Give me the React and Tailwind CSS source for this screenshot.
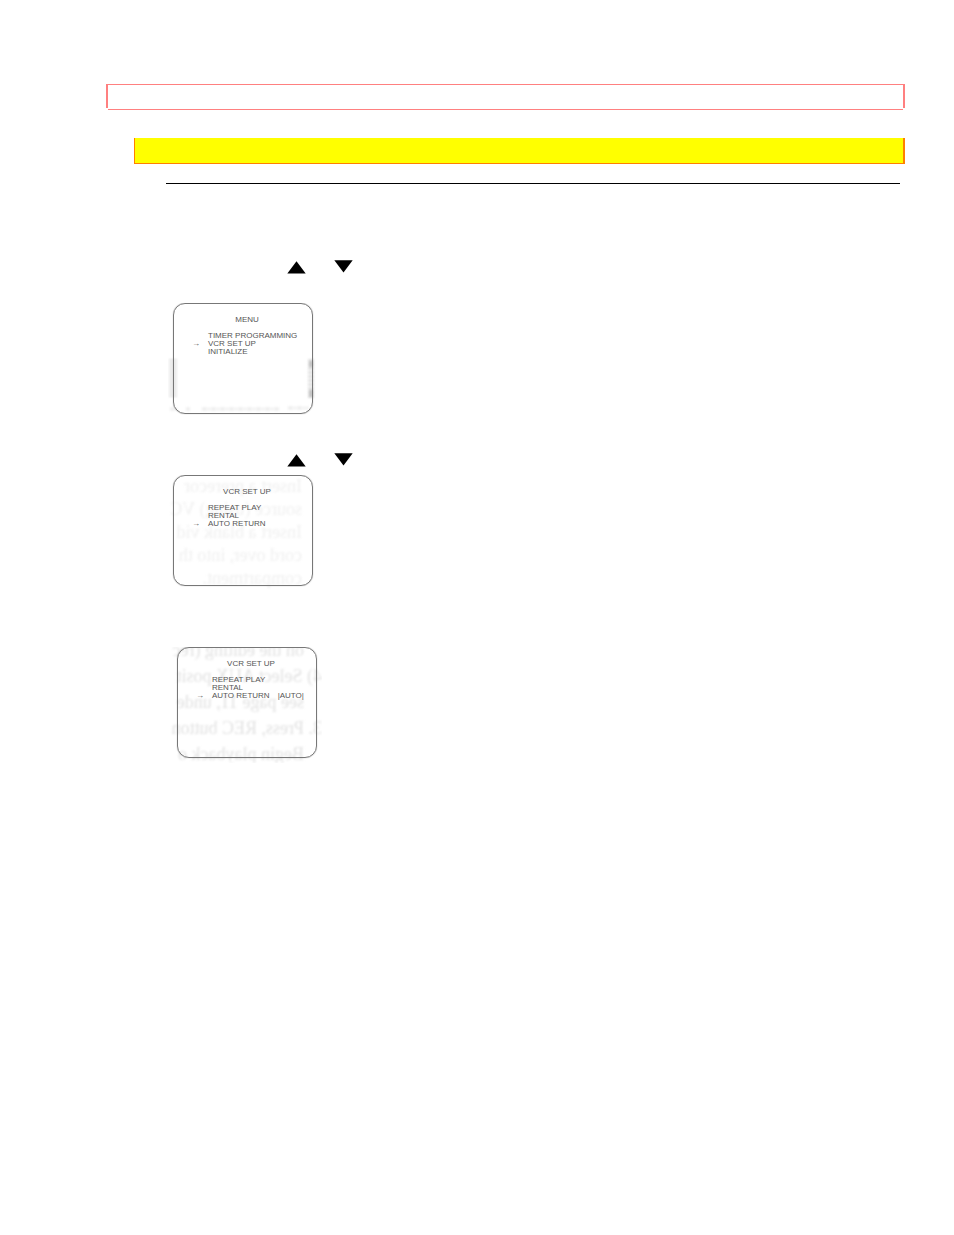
import React from 'react';
import clsx from 'clsx';

const setupItems = ['REPEAT PLAY', 'RENTAL', 'AUTO RETURN'];

const ArrowKeys = () => (
  <div className="ml-[181px] flex h-4 items-start gap-7">
    <svg className="mt-0.5 h-[13px] w-[19px]" viewBox="0 0 19 13" role="img" aria-label="Up">
      <path d="M9.5 0.3 L18.7 12.6 H0.3 Z" fill="#000" />
    </svg>
    <svg className="mt-px h-[13px] w-[19px]" viewBox="0 0 19 13" role="img" aria-label="Down">
      <path d="M0.3 0.3 H18.7 L9.5 12.6 Z" fill="#000" />
    </svg>
  </div>
);

// Faint print showing through from the back of the sheet, so it reads mirrored
const ShowThrough = ({ lines, className }) => (
  <div
    aria-hidden="true"
    className={clsx(
      'absolute inset-0 -scale-x-100 overflow-hidden whitespace-pre font-["Liberation_Serif",serif] text-[18px] blur-[1px]',
      className
    )}
  >
    {lines.map((line) => (
      <div key={line}>{line}</div>
    ))}
  </div>
);

const Smudges = () => (
  <svg aria-hidden="true" className="absolute inset-0 h-full w-full blur-[1px]" viewBox="0 0 154 116">
    <path d="M5 56 V95" stroke="#e2e2e2" strokeWidth="8" strokeDasharray="2 1" />
    <path d="M143 56 V95" stroke="#e2e2e2" strokeWidth="6" strokeDasharray="3 1" />
    <path d="M143 58 V64 M143 87 V94" stroke="#c4c4c4" strokeWidth="4" />
    <path d="M2 106 H9 M18 106 H22 M34 106 H112 M120 105 H140" stroke="#ececec" strokeWidth="3" strokeDasharray="5 1 2 1" />
  </svg>
);

const TvScreen = ({ title, items, active, value, className, children }) => (
  <div className="relative h-[116px] w-[154px] overflow-hidden">
    {children}
    <div
      className={clsx(
        'relative h-[111px] w-[140px] rounded-xl border border-[#777] pt-3 font-["Liberation_Sans",sans-serif] text-[8px] leading-2 text-[#555] shadow-[0_0_1px_#999]',
        className
      )}
    >
      <h2 className="pl-2 text-center">{title}</h2>
      <ul className="mt-2">
        {items.map((item) => (
          <li key={item} className="flex">
            <span className="w-[34px] pl-[18px]">{item === active ? '→' : ''}</span>
            <span>{item}</span>
            {item === active && value && <span className="ml-2">{value}</span>}
          </li>
        ))}
      </ul>
    </div>
  </div>
);

const App = () => {
  return (
    <main className="min-h-screen bg-white pt-21 pr-[49px] pb-10 pl-[106px]">
      {/* Title bars */}
      <header>
        <div className="h-6 border-x-2 border-t border-[#ff8080]" />
        <div className="mx-0.5 mt-px h-px bg-[#ff8080]" />
        <div className="mt-7 ml-7 h-[26px] border-r-2 border-b border-l border-[#ff8000] bg-[#ffff00]" />
        <hr className="mt-[19px] mr-[5px] ml-15 border-t border-black" />
      </header>

      {/* Setup steps */}
      <section className="mt-[75px] ml-[62px]">
        <div className="-ml-[62px]">
          <ArrowKeys />
        </div>
        <div className="mt-7">
          <TvScreen
            title="MENU"
            items={['TIMER PROGRAMMING', 'VCR SET UP', 'INITIALIZE']}
            active="VCR SET UP"
            className="ml-[5px]"
          >
            <Smudges />
          </TvScreen>
        </div>

        <div className="mt-[33px] -ml-[62px]">
          <ArrowKeys />
        </div>
        <div className="mt-[7px]">
          <TvScreen title="VCR SET UP" items={setupItems} active="AUTO RETURN" className="ml-[5px]">
            <ShowThrough
              className="pl-5 leading-[23px] text-[#f0f0f0]"
              lines={['Insert a prerecor', 'source (using) VC', 'Insert a blank vid', 'cord over, into th', 'compartment.']}
            />
          </TvScreen>
        </div>

        <div className="mt-14">
          <TvScreen title="VCR SET UP" items={setupItems} active="AUTO RETURN" value="|AUTO|" className="ml-[9px]">
            <ShowThrough
              className="-mt-2.5 leading-[26px] text-[#e2e2e2]"
              lines={['    on the editing (rec', '4) Select AUX posit', '    see page 11, unde', '3. Press, REC button', '    Begin playback o']}
            />
          </TvScreen>
        </div>
      </section>
    </main>
  );
};

export default App;
